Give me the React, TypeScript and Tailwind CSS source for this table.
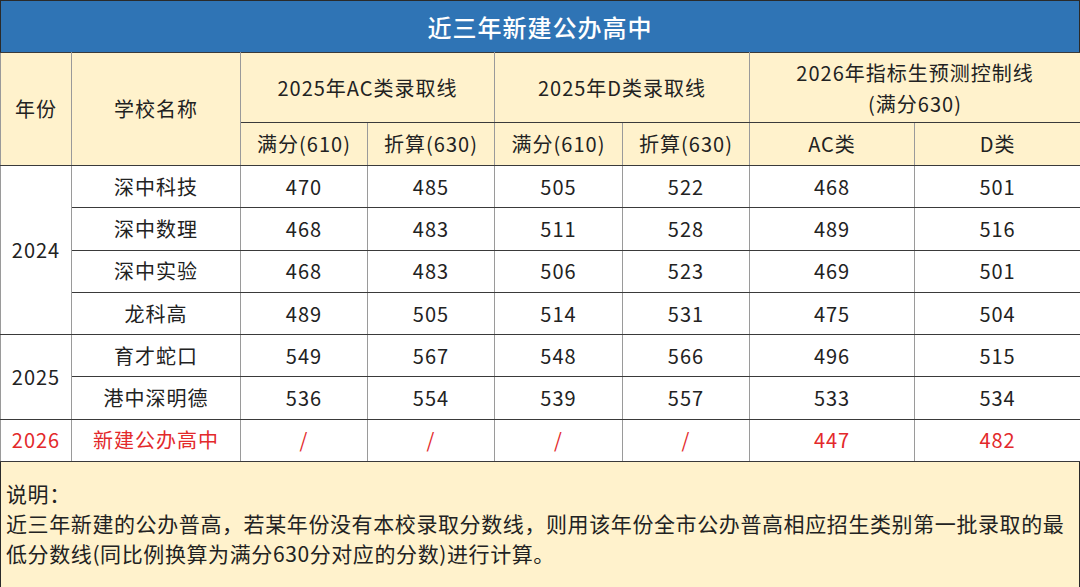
const FONT = "font-['Noto_Sans_CJK_SC','Noto_Sans',sans-serif]";

type Row = { school: string; v: string[] };

const Y2024: Row[] = [
  { school: "深中科技", v: ["470", "485", "505", "522", "468", "501"] },
  { school: "深中数理", v: ["468", "483", "511", "528", "489", "516"] },
  { school: "深中实验", v: ["468", "483", "506", "523", "469", "501"] },
  { school: "龙科高", v: ["489", "505", "514", "531", "475", "504"] },
];

const Y2025: Row[] = [
  { school: "育才蛇口", v: ["549", "567", "548", "566", "496", "515"] },
  { school: "港中深明德", v: ["536", "554", "539", "557", "533", "534"] },
];

const cell = "border-x border-x-[#9a9a9a] border-y border-y-[#3a3a3a] text-center align-middle p-0";
const head = `${cell} bg-[#fff2cc] font-normal`;

function BodyRow({ row, year, span }: { row: Row; year?: string; span?: number }) {
  return (
    <tr className="h-[42.3px]">
      {year && (
        <td rowSpan={span} className={cell}>
          {year}
        </td>
      )}
      <td className={cell}>{row.school}</td>
      {row.v.map((n, i) => (
        <td key={i} className={cell}>
          {n}
        </td>
      ))}
    </tr>
  );
}

export default function App() {
  return (
    <div className={`w-[1080px] h-[587px] overflow-hidden bg-white ${FONT} text-[20px] tracking-[1px] text-[#222]`}>
      <div className="h-[52px] bg-[#2f74b5] border border-[#2a2a2a] border-b-0 flex items-center justify-center text-white text-[24px] font-medium tracking-[1px]">
        近三年新建公办高中
      </div>
      <table className="w-full table-fixed border-collapse border border-[#2a2a2a] leading-none">
        <colgroup>
          <col className="w-[71px]" />
          <col className="w-[169px]" />
          <col className="w-[127px]" />
          <col className="w-[127px]" />
          <col className="w-[128px]" />
          <col className="w-[127px]" />
          <col className="w-[165px]" />
          <col className="w-[166px]" />
        </colgroup>
        <thead>
          <tr className="h-[70px]">
            <th rowSpan={2} className={head}>年份</th>
            <th rowSpan={2} className={head}>学校名称</th>
            <th colSpan={2} className={head}>2025年AC类录取线</th>
            <th colSpan={2} className={head}>2025年D类录取线</th>
            <th colSpan={2} className={`${head} leading-[31px]`}>
              2026年指标生预测控制线
              <br />
              (满分630)
            </th>
          </tr>
          <tr className="h-[43px]">
            <th className={head}>满分(610)</th>
            <th className={head}>折算(630)</th>
            <th className={head}>满分(610)</th>
            <th className={head}>折算(630)</th>
            <th className={head}>AC类</th>
            <th className={head}>D类</th>
          </tr>
        </thead>
        <tbody>
          {Y2024.map((r, i) => (
            <BodyRow key={r.school} row={r} year={i === 0 ? "2024" : undefined} span={4} />
          ))}
          {Y2025.map((r, i) => (
            <BodyRow key={r.school} row={r} year={i === 0 ? "2025" : undefined} span={2} />
          ))}
          <tr className="h-[42.3px] text-[#e3292b]">
            <td className={cell}>2026</td>
            <td className={cell}>新建公办高中</td>
            <td className={cell}>/</td>
            <td className={cell}>/</td>
            <td className={cell}>/</td>
            <td className={cell}>/</td>
            <td className={cell}>447</td>
            <td className={cell}>482</td>
          </tr>
        </tbody>
      </table>
      <div className="h-[126px] bg-[#fff2cc] border border-t-0 border-[#2a2a2a] px-[5px] pt-[16px] text-[21px] tracking-[0.6px] leading-[30px]">
        <p>说明：</p>
        <p className="whitespace-nowrap">
          近三年新建的公办普高，若某年份没有本校录取分数线，则用该年份全市公办普高相应招生类别第一批录取的最
          <br />
          低分数线(同比例换算为满分630分对应的分数)进行计算。
        </p>
      </div>
    </div>
  );
}
